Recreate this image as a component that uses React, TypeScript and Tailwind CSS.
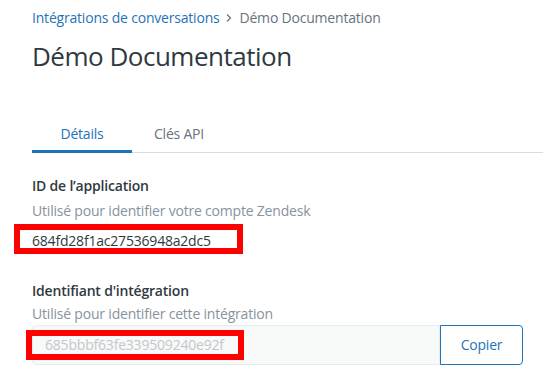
export default function App() {
  return (
    <div className="w-[543px] h-[380px] bg-white overflow-hidden font-['Open_Sans',sans-serif] tracking-[-0.2px]">
      <div className="pl-8 pt-2">
        <div className="flex items-center text-[14px] leading-5">
          <span className="text-[#1f73b7]">Intégrations de conversations</span>
          <svg width="10" height="12" viewBox="0 0 10 12" className="ml-[4px] mr-[6px] text-[#68737d]">
            <path d="M3 2.5 6.5 6 3 9.5" fill="none" stroke="currentColor" strokeWidth="1.2" />
          </svg>
          <span className="text-[#68737d]">Démo Documentation</span>
        </div>
        <h1 className="mt-3 text-[26px] leading-8 text-[#2f3941] tracking-[-0.5px]">Démo Documentation</h1>

        <div className="mt-[52px] flex border-b border-[#d8dcde] text-[14px] leading-5">
          <div className="w-[100px] text-center pb-[6px] border-b-[3px] border-[#1f73b7] text-[#1f73b7] -mb-px">
            Détails
          </div>
          <div className="w-[94px] text-center pb-[6px] text-[#68737d]">Clés API</div>
        </div>

        <div className="mt-[23px] text-[14px] leading-5">
          <div className="font-semibold text-[#2f3941]">ID de l’application</div>
          <div className="mt-[5px] text-[#87929d]">Utilisé pour identifier votre compte Zendesk</div>
          <div className="relative mt-[10px] text-[#2f3941]">
            684fd28f1ac27536948a2dc5
            <div className="absolute left-[-18px] top-[-7px] w-[229px] h-[30px] border-[6px] border-[#ff0000]" />
          </div>

          <div className="mt-[30px] font-semibold text-[#2f3941]">Identifiant d'intégration</div>
          <div className="mt-[3px] text-[#87929d]">Utilisé pour identifier cette intégration</div>
          <div className="mt-[1px] flex h-10">
            <div className="relative w-[408px] bg-[#f8f9f9] border border-[#e9ebed] rounded-l flex items-center pl-3 text-[#c2c8cc]">
              685bbbf63fe339509240e92f
              <div className="absolute left-[-7px] top-[4px] w-[218px] h-[30px] border-[6px] border-[#ff0000]" />
            </div>
            <button className="w-[83px] border border-[#1f73b7] rounded-r text-[#1f73b7] text-[14px]">Copier</button>
          </div>
        </div>
      </div>
    </div>
  )
}
